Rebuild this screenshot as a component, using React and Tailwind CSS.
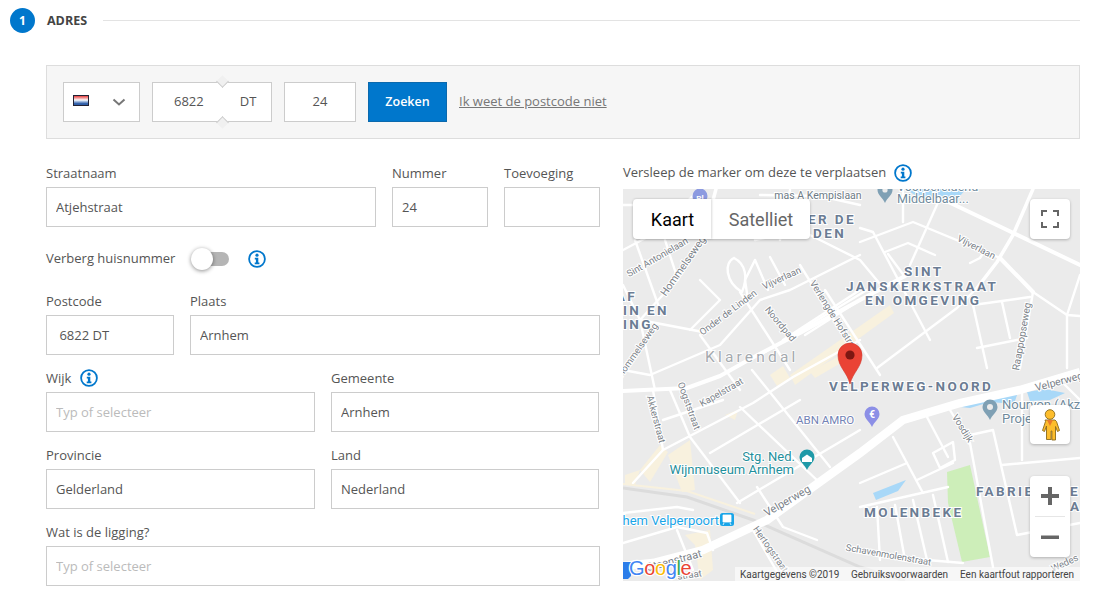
import React from 'react'

const InfoIcon = () => (
  <svg width="18" height="18" viewBox="0 0 18 18" fill="none">
    <circle cx="9" cy="9" r="7.9" stroke="#0077cc" strokeWidth="1.8" />
    <circle cx="9" cy="5.2" r="1.6" fill="#0077cc" />
    <path d="M6.800 7.800h3.500v4.800h1.100v1.600H6.700v-1.600h1.200V9.400H6.800z" fill="#0077cc" />
  </svg>
)

const Field = ({ label, value, placeholder, className, info }) => (
  <div className={className}>
    <div className="flex h-[18px] items-center gap-[9px] text-[13px] leading-[18px] text-[#555]">
      {label}
      {info && <InfoIcon />}
    </div>
    <input
      readOnly
      defaultValue={value}
      placeholder={placeholder}
      className="mt-[5px] h-10 w-full border border-[#ccc] bg-white px-[9px] text-[13px] text-[#555] outline-none placeholder:text-[#bbb]"
    />
  </div>
)

const roads = [
  'M633 483L663 450L753 403L793 377L860 340',
  'M653 390L663 450', 'M670 390L690 437L740 503', 'M752 370L830 467', 'M740 407L820 483',
  'M663 420L723 400', 'M710 453L800 400', 'M737 503L860 430', 'M757 487L783 527L817 540',
  'M623 543L677 527L707 533L713 550', 'M623 513L677 507L693 510', 'M753 530L780 577', 'M677 530L693 570',
  'M893 437L923 493', 'M927 417L948 457', 'M933 453L953 442L955 460L940 468L933 453',
  'M860 483L907 463', 'M917 480L953 463', 'M948 487L860 507', 'M950 410L970 443L993 567',
  'M970 435L993 430L1017 535L1080 523', 'M1002 465L1080 458', 'M1022 387L1022 460', 'M1065 385L1080 400',
  'M877 507L880 560', 'M895 505L905 560', 'M913 500L927 560', 'M933 495L948 562', 'M860 550L927 560L963 563',
  'M903 189L903 222', 'M860 242L913 222L1000 258', 'M940 198L910 265', 'M860 228L873 232L930 340',
  'M973 305L1030 297', 'M973 305L987 368', 'M1002 302L1010 338', 'M877 368L957 308L977 288',
  'M977 348L1027 338', 'M1067 315L1067 368', 'M1080 275L1067 315', 'M1033 292L1067 315L1080 316',
  'M1033 292L1020 368', 'M885 252L908 243L935 255', 'M888 254L905 277', 'M970 263L980 258L985 250',
  'M623 250L655 233L700 189', 'M640 320L670 287', 'M623 285L640 320L703 332', 'M635 240L660 310',
  'M665 240L678 280', 'M640 320L655 390', 'M623 370L650 375L720 345L760 300L790 290L860 255',
  'M700 280L720 300L690 330', 'M740 292L790 370', 'M700 335L740 390', 'M734 258C724 262 725 282 742 292C748 278 746 264 734 258',
  'M755 260L768 290', 'M755 260L745 280L748 300',
  'M770 257L785 285', 'M790 190L780 240', 'M755 240L800 230L860 260L885 290', 'M800 265L840 330',
  'M783 340L860 290', 'M760 355L875 285', 'M825 290L880 375', 'M805 335L860 300',
  'M623 205L700 205', 'M760 195L820 196L860 205',
]

const beige = [
  'M790 375L890 305L894 313L795 385z', 'M770 375L783 366L790 378L777 386z', 'M640 470L660 445L668 452L650 482z',
  'M668 455L690 440L695 490L682 492z', 'M625 475L640 470L635 485L625 485z', 'M685 535L710 530L713 570L700 580L695 545z',
  'M810 372L850 350L853 356L815 378z', 'M725 415L738 410L735 420z',
]

const Label = ({ x, y, r, size = 10, fill = '#7b8289', anchor = 'middle', children }) => (
  <text
    x={x}
    y={y}
    fontSize={size}
    fill={fill}
    textAnchor={anchor}
    transform={r ? `rotate(${r} ${x} ${y})` : undefined}
    stroke="#fff"
    strokeWidth="2"
    paintOrder="stroke"
    fontFamily="Roboto, sans-serif"
  >
    {children}
  </text>
)

const Area = ({ x, y, children, anchor = 'start' }) => (
  <text
    x={x}
    y={y}
    fontSize="13.5"
    fontWeight="700"
    letterSpacing="2.4"
    fill="#6b7c93"
    textAnchor={anchor}
    stroke="#fff"
    strokeWidth="2"
    paintOrder="stroke"
    fontFamily="Roboto, sans-serif"
  >
    {children}
  </text>
)

const Poi = ({ x, y, fill, children }) => (
  <g>
    <path
      d={`M${x} ${y + 11}C${x - 2} ${y + 6} ${x - 7.5} ${y + 3} ${x - 7.5} ${y - 2}A7.5 7.5 0 1 1 ${x + 7.5} ${y - 2}C${x + 7.5} ${y + 3} ${x + 2} ${y + 6} ${x} ${y + 11}z`}
      fill={fill}
    />
    {children}
  </g>
)

const MapArt = () => (
  <svg viewBox="623 189 457 392" className="block h-full w-full">
    <rect x="623" y="189" width="457" height="392" fill="#ebebeb" />
    {beige.map(d => <path key={d} d={d} fill="#f8f1de" />)}
    <path d="M947 472L970 465L990 557L962 562L948 503z" fill="#cdeeb9" />
    <path d="M873 493L906 480L898 491L876 500z" fill="#a8d8f8" />
    <path d="M960 407L1018 392L1014 404L990 402L970 408z" fill="#a8d8f8" />
    <path d="M1027 392L1045 389L1065 393L1050 400L1030 401z" fill="#a8d8f8" />
    <path d="M905 189H966L960 196L935 199L915 195z" fill="#a8d8f8" />
    <g fill="none" stroke="#fff" strokeWidth="2.4" strokeLinecap="round" strokeLinejoin="round">
      {roads.map(d => <path key={d} d={d} />)}
    </g>
    <g fill="none" stroke="#fff" strokeLinecap="round" strokeLinejoin="round">
      <path d="M940 198L1003 228L1080 265" strokeWidth="4" />
      <path d="M1033 189L1013 235L997 262L977 288" strokeWidth="3.5" />
      <path d="M1000 258L1033 292" strokeWidth="4" />
      <path d="M672 283L703 238L716 189" strokeWidth="3.5" />
      <path d="M623 391L687 388L720 376L752 358L800 333L860 300L905 276" strokeWidth="4" />
    </g>
    <path d="M623 488L687 497L753 520L860 567L905 581" fill="none" stroke="#dcdcdc" strokeWidth="3" />
    <path d="M623 484L687 491L755 514" fill="none" stroke="#f8f1de" strokeWidth="2" />
    <path d="M623 566L653 563L703 550L767 520L860 453L903 420L960 403L1020 390L1080 372" fill="none" stroke="#fff" strokeWidth="8.5" />

    <Label x={659} y={260} r={-30} size={9.5}>Sint Antonielaan</Label>
    <Label x={686} y={268} r={-55} size={10.5}>Hommelseweg</Label>
    <Label x={730} y={315} r={-37} size={9.5}>Onder de Linden</Label>
    <Label x={783} y={281} r={-25} size={9.5}>Vijverlaan</Label>
    <Label x={778} y={326} r={50} size={9.5}>Noordpad</Label>
    <Label x={832} y={319} r={58} size={9.5}>Verlengde Hofstraat</Label>
    <Label x={975} y={250} r={27} size={9.5}>Vijverlaan</Label>
    <Label x={1025} y={337} r={-80} size={10}>Raappopseweg</Label>
    <Label x={640} y={352} r={-55} size={9.5}>Hommelseweg</Label>
    <Label x={723} y={395} r={-30} size={9.5}>Kapelstraat</Label>
    <Label x={653} y={420} r={75} size={9.5}>Akkerstraat</Label>
    <Label x={686} y={407} r={70} size={9.5}>Oogststraat</Label>
    <Label x={768} y={551} r={55} size={9.5}>Hertogstraat</Label>
    <Label x={960} y={430} r={58} size={9.5}>Vosdijk</Label>
    <Label x={789} y={504} r={-30} size={11}>Velperweg</Label>
    <Label x={675} y={564} r={-15} size={11}>Steenstraat</Label>
    <Label x={690} y={578} r={-8} size={9.5}>straat</Label>
    <Label x={1060} y={385} r={-15} size={10.5}>Velperweg</Label>
    <Label x={888} y={558} r={10} size={9.5}>Schavenmolenstraat</Label>
    <Label x={1066} y={566} r={-25} size={9.5}>Wedes</Label>
    <Label x={818} y={199} size={10.5} fill="#6d7a85">mas A Kempislaan</Label>
    <Label x={897} y={203} size={12.5} fill="#6f8a9c" anchor="start">Middelbaar...</Label>
    <Label x={897} y={191} size={12.5} fill="#6f8a9c" anchor="start">Voorbereidend</Label>
    <Label x={1002} y={409} size={13} fill="#6f8a9c" anchor="start">Nouryon (Akzo</Label>
    <Label x={1002} y={423} size={13} fill="#6f8a9c" anchor="start">Project</Label>
    <Label x={796} y={424} size={11.5} fill="#7383b5" anchor="start">ABN AMRO</Label>
    <Label x={795} y={461} size={13} fill="#1f8f9c" anchor="end">Stg. Ned.</Label>
    <Label x={794} y={474} size={13} fill="#1f8f9c" anchor="end">Wijnmuseum Arnhem</Label>
    <Label x={719} y={525} size={13} fill="#1aa5e8" anchor="end">Arnhem Velperpoort</Label>

    <text x={705} y={362} fontSize="15.5" letterSpacing="3.2" fill="#a4a9ae" stroke="#fff" strokeWidth="1.5" paintOrder="stroke" fontFamily="Roboto, sans-serif">Klarendal</text>
    <Area x={808} y={224}>ER DE</Area>
    <Area x={813} y={238}>DEN</Area>
    <Area x={904} y={276}>SINT</Area>
    <Area x={846} y={291}>JANSKERKSTRAAT</Area>
    <Area x={865} y={305}>EN OMGEVING</Area>
    <Area x={637} y={301} anchor="end">AF</Area>
    <Area x={623} y={315}>IN EN</Area>
    <Area x={623} y={329}>ING</Area>
    <Area x={829} y={391}>VELPERWEG-NOORD</Area>
    <Area x={976} y={496}>FABRIE</Area>
    <Area x={1070} y={496}>E</Area>
    <Area x={1070} y={511}>A</Area>
    <Area x={864} y={517}>MOLENBEKE</Area>

    <Poi x={700} y={198} fill="#8c9ae0">
      <text x={700} y={201} fontSize="8" fontWeight="700" fill="#fff" textAnchor="middle" fontFamily="Roboto, sans-serif">Pl</text>
    </Poi>
    <Poi x={885} y={192} fill="#7fa0b4"><circle cx={885} cy={190} r={2.6} fill="#ebebeb" /></Poi>
    <Poi x={990} y={409} fill="#7fa0b4"><circle cx={990} cy={407} r={3} fill="#ebebeb" /></Poi>
    <Poi x={872} y={416} fill="#8c8fe6">
      <text x={872} y={418} fontSize="10" fontWeight="700" fill="#fff" textAnchor="middle" fontFamily="Roboto, sans-serif">€</text>
    </Poi>
    <Poi x={807} y={459} fill="#1f9aa8">
      <path d="M802 458l5-3.5 5 3.5v4h-10z" fill="#fff" />
    </Poi>
    <rect x="720" y="513" width="14" height="13" rx="2.5" fill="#1aa5e8" />
    <path d="M723 515h8v7h-8zM724 523l-1 2M730 523l1 2" fill="#fff" stroke="#fff" strokeWidth=".8" />

    <path d="M850 384C847 372 838 367 838 355A12 12 0 1 1 862 355C862 367 853 372 850 384z" fill="#ea4335" stroke="#d3352a" strokeWidth=".6" />
    <circle cx="850" cy="355" r="4.6" fill="#7d1712" />

    <path d="M623 562h8v14l-3 3h-5z" fill="#2b7de9" />
    <text x={629} y={575} fontSize="20" fontFamily="Liberation Sans, sans-serif" stroke="#fff" strokeWidth="2.4" paintOrder="stroke" letterSpacing="-.4">
      <tspan fill="#4285f4">G</tspan><tspan fill="#ea4335">o</tspan><tspan fill="#fbbc05">o</tspan><tspan fill="#4285f4">g</tspan><tspan fill="#34a853">l</tspan><tspan fill="#ea4335">e</tspan>
    </text>
  </svg>
)

const Pegman = () => (
  <svg width="20" height="32" viewBox="0 0 20 32">
    <g stroke="#8a6a1c" strokeWidth=".9" strokeLinejoin="round">
      <circle cx="10" cy="5.5" r="4.8" fill="#fdbd2c" />
      <path d="M5 11h10l1.500 1.500 3 9-2 1-2-5v13.500h-3.600V22h-.8v8.500H6.500V17l-2 5.500-2-1 3-9z" fill="#fdbd2c" />
    </g>
    <path d="M7 11h6l-3 6z" fill="#e8792b" />
  </svg>
)

const ctrl = 'absolute w-10 bg-white rounded-sm shadow-[0_1px_3px_rgba(0,0,0,0.25)] flex items-center justify-center'

export default function App() {
  return (
    <div className="h-[592px] w-[1095px] overflow-hidden bg-white font-['Open_Sans',sans-serif] text-[#555]">
      <div className="flex h-[33px] items-center pl-[10px] pr-[15px] pt-2">
        <div className="flex h-[25px] w-[25px] items-center justify-center rounded-full bg-[#0077cc] text-[12px] font-bold text-white">1</div>
        <div className="ml-3 w-[41px] pt-px text-[12.5px] font-bold text-[#444]">ADRES</div>
        <div className="ml-[15px] h-px flex-1 bg-[#e3e3e3]" />
      </div>

      <div className="ml-[46px] mr-[15px] mt-8 flex h-[74px] items-center border border-[#ddd] bg-[#f6f6f6] px-4">
        <div className="flex h-10 w-[77px] items-center justify-between border border-[#ccc] bg-white pl-[9px] pr-[13px]">
          <div className="mb-1 h-[11px] w-4 border border-[#223] bg-[linear-gradient(#e8403f_0%,#f5b9b9_30%,#fff_45%,#a9c0e2_60%,#2f5ea8_85%)]" />
          <svg width="14" height="14" viewBox="0 0 14 14" fill="none"><path d="M1.500 4.500l5.500 5 5.500-5" stroke="#777" strokeWidth="2" /></svg>
        </div>
        <div className="relative ml-3 flex h-10 w-[120px] items-center border border-[#ccc] bg-white text-[13px]">
          <span className="ml-[21px]">6822</span>
          <span className="ml-[36px]">DT</span>
          <div className="absolute left-[65px] top-[-6px] h-[9px] w-[9px] rotate-45 border-b border-r border-[#ccc] bg-[#f0f0f0]" />
          <div className="absolute bottom-[-6px] left-[65px] h-[9px] w-[9px] rotate-45 border-l border-t border-[#ccc] bg-[#f0f0f0]" />
        </div>
        <div className="ml-3 flex h-10 w-[72px] items-center justify-center border border-[#ccc] bg-white text-[13px]">24</div>
        <button className="ml-3 h-10 w-[79px] border border-[#0b69ad] bg-[#0077cc] text-[12.5px] font-semibold text-white">Zoeken</button>
        <a className="ml-3 text-[13px] text-[#777] underline">Ik weet de postcode niet</a>
      </div>

      <div className="ml-[46px] mr-[15px] mt-[25px] flex gap-[23px]">
        <div className="w-[554px]">
          <div className="flex gap-4">
            <Field label="Straatnaam" value="Atjehstraat" className="w-[330px]" />
            <Field label="Nummer" value="24" className="w-24" />
            <Field label="Toevoeging" value="" className="w-24" />
          </div>
          <div className="mt-5 flex h-6 items-center text-[13px]">
            Verberg huisnummer
            <div className="relative ml-[17px] h-[14px] w-[37px] rounded-full bg-[#b5b5b5]">
              <div className="absolute left-[-1px] top-[-4px] h-[22px] w-[22px] rounded-full bg-white shadow-[0_1px_4px_rgba(0,0,0,0.45)]" />
            </div>
            <span className="ml-[19px] flex"><InfoIcon /></span>
          </div>
          <div className="mt-[21px] flex gap-4">
            <Field label="Postcode" value=" 6822 DT" className="w-32" />
            <Field label="Plaats" value="Arnhem" className="w-[410px]" />
          </div>
          <div className="mt-[14px] flex gap-4">
            <Field label="Wijk" placeholder="Typ of selecteer" info className="w-[269px]" />
            <Field label="Gemeente" value="Arnhem" className="w-[268px]" />
          </div>
          <div className="mt-[14px] flex gap-4">
            <Field label="Provincie" value="Gelderland" className="w-[269px]" />
            <Field label="Land" value="Nederland" className="w-[268px]" />
          </div>
          <div className="mt-[14px]">
            <Field label="Wat is de ligging?" placeholder="Typ of selecteer" />
          </div>
        </div>

        <div className="w-[457px]">
          <div className="flex h-[17px] items-center gap-2 text-[13px]">
            Versleep de marker om deze te verplaatsen
            <InfoIcon />
          </div>
          <div className="relative mt-2 h-[392px] overflow-hidden">
            <MapArt />
            <div className="absolute left-[10px] top-[10px] flex h-10 rounded-sm bg-white font-['Roboto',sans-serif] text-[18px] shadow-[0_1px_3px_rgba(0,0,0,0.25)]">
              <div className="flex w-[78px] items-center justify-center pl-px text-black shadow-[1px_0_2px_rgba(0,0,0,0.15)]">Kaart</div>
              <div className="flex w-[99px] items-center justify-center pl-px text-[#666]">Satelliet</div>
            </div>
            <div className={`${ctrl} right-[10px] top-[10px] h-10`}>
              <svg width="18" height="18" viewBox="0 0 18 18" fill="none" stroke="#666" strokeWidth="2">
                <path d="M1 6V1h5M12 1h5v5M17 12v5h-5M6 17H1v-5" />
              </svg>
            </div>
            <div className={`${ctrl} right-[10px] top-[216px] h-[39px]`}><Pegman /></div>
            <div className={`${ctrl} right-[10px] top-[287px] h-[81px] flex-col`}>
              <div className="flex h-10 items-center justify-center">
                <svg width="18" height="18" viewBox="0 0 18 18"><path d="M7 0h4v7h7v4h-7v7H7v-7H0V7h7z" fill="#666" /></svg>
              </div>
              <div className="h-px w-[30px] bg-[#e6e6e6]" />
              <div className="flex h-10 items-center justify-center">
                <svg width="18" height="18" viewBox="0 0 18 18"><path d="M0 7.500h18v3.500H0z" fill="#666" /></svg>
              </div>
            </div>
            <div className="absolute bottom-0 right-0 flex h-[14px] w-[345px] items-center bg-white/60 pl-[5px] font-['Roboto',sans-serif] text-[10px] text-[#444]">
              <span className="w-[111px]">Kaartgegevens ©2019</span>
              <span className="w-[109px]">Gebruiksvoorwaarden</span>
              <span>Een kaartfout rapporteren</span>
            </div>
          </div>
        </div>
      </div>
    </div>
  )
}
